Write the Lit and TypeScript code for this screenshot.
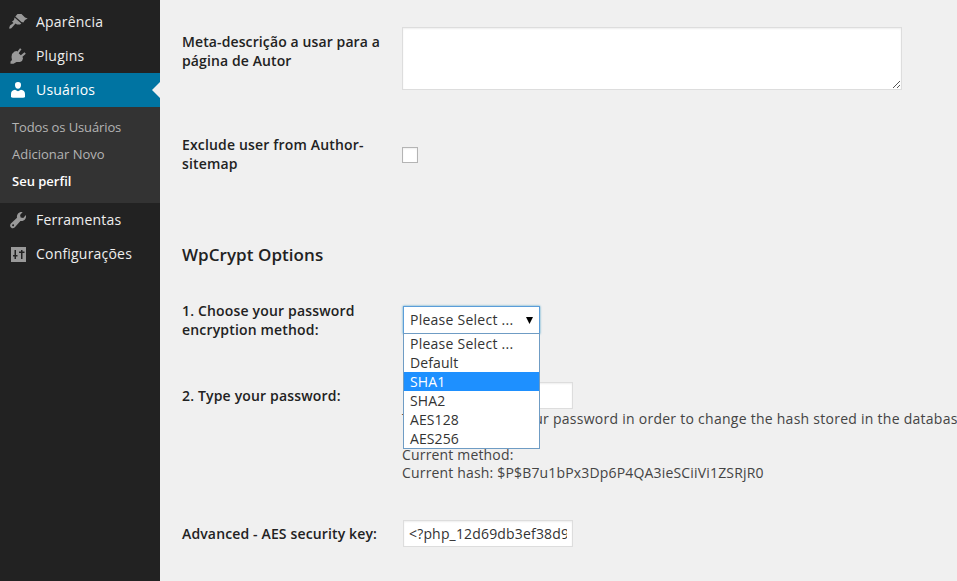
import { LitElement, html, css, svg } from "lit";
import { customElement, property, state } from "lit/decorators.js";
import { classMap } from "lit/directives/class-map.js";

const icons = {
  brush: svg`<path d="M1 16.500 2 13.500 5.500 11 4 9.500 6 8 6.500 5.500 13.300 11.500 12 12.500H9L7.500 11.500 4 15.500 3 16.500z"/><path d="M7.300 4.500 9.500 2h4l1.500 1.500L17 5.500 19.700 6.500 17 8 15.300 10.500 13.500 10z"/>`,
  plug: svg`<path d="M3.500 11 4 8 6.500 5.500 8.500 5 9.500 5.500 12 2.300 13.500 3.300 10.700 7.200 12.800 9.300 16.500 6.300 17.800 7.700 14.500 10.800 15 12.500 14 15 12 16H8.500L5.500 17.700H2.500V15.500L4 14z"/>`,
  user: svg`<path transform="translate(0 .7)" d="M10 1.300a3 3 0 0 1 3 3.200c0 1.900-1.200 3.600-3 3.600S7 6.400 7 4.500a3 3 0 0 1 3-3.200zM7 9l3 1.600L13 9c2.500.4 4 1.700 4 4.300v3c-.3.400-1 .7-2 .7H5c-1 0-1.700-.3-2-.7v-3C3 10.700 4.500 9.400 7 9z"/>`,
  wrench: svg`<path transform="matrix(1.070 0 0 1.110 0 .1)" fill-rule="evenodd" d="M16.700 4.400c.8 3-1.500 5.900-5.100 5.400l-5.200 5.600c-2.500 2.500-5.900-.8-3.700-3.400l5.700-5.200C7.900 3.300 10.800 1 13.700 1.800L11.300 4.400l.5 2.300 2.500.5zM3.900 13.400a.9.900 0 1 0 1.700.6.900.9 0 0 0-1.700-.6z"/>`,
  sliders: svg`<path fill-rule="evenodd" d="M3 3h15v15H3zM6.500 6v5H5v1.500h1.500V15H8v-2.500h1.500V11H8V6zM13 6v1.500h-2V9h2v6h1.500V9h2V7.500h-2V6z"/>`,
};

@customElement("menu-item")
class MenuItem extends LitElement {
  @property() icon: keyof typeof icons = "brush";
  @property() label = "";
  @property({ type: Boolean, reflect: true }) current = false;

  static styles = css`
    :host { display: flex; align-items: center; height: 34px; box-sizing: border-box; padding-left: 8px; gap: 8px; color: #eee; position: relative; font-size: 14px; letter-spacing: 0.2px; }
    :host([current]) { background: #0074a2; color: #fff; }
    :host([current])::after { content: ""; position: absolute; right: 0; top: 9px; border: 8px solid transparent; border-left: 0; border-right-color: #f0f0f0; }
    .icon { width: 20px; height: 20px; flex: none; fill: #999; }
    :host([current]) .icon { fill: #fff; }
    .label { line-height: 18px; white-space: nowrap; }
  `;

  render() {
    return html`<svg class="icon" viewBox="0 0 20 20">${icons[this.icon]}</svg><span class="label">${this.label}</span>`;
  }
}

@customElement("method-select")
class MethodSelect extends LitElement {
  @state() private highlighted = 2;
  private options = ["Please Select ...", "Default", "SHA1", "SHA2", "AES128", "AES256"];

  static styles = css`
    :host { display: block; position: relative; width: 137px; height: 28px; color: #333; font-size: 14px; letter-spacing: 0.1px; z-index: 2; }
    .field { box-sizing: border-box; height: 28px; border: 1px solid #5b9dd9; background: #fff; box-shadow: 0 0 2px rgba(30, 140, 190, 0.8); display: flex; align-items: center; justify-content: space-between; padding: 0 6px; line-height: 18px; }
    .field, .option:first-child { letter-spacing: 0.25px; }
    .arrow { width: 7px; height: 7px; fill: #000; }
    .list { position: absolute; left: 0; top: 27px; width: 137px; height: 116px; box-sizing: border-box; border: 1px solid #6f9cc4; background: #fff; }
    .option { height: 19px; line-height: 19px; padding-left: 6px; }
    .on { background: #1e90ff; color: #fff; }
  `;

  render() {
    return html`
      <div class="field"><span>${this.options[0]}</span><svg class="arrow" viewBox="0 0 7 7"><path d="M0 0h7L3.500 7z" /></svg></div>
      <div class="list">
        ${this.options.map((o, i) => html`<div class=${classMap({ option: true, on: i === this.highlighted })} @mouseenter=${() => (this.highlighted = i)}>${o}</div>`)}
      </div>`;
  }
}

@customElement("app-root")
class AppRoot extends LitElement {
  static styles = css`
    :host { display: flex; width: 957px; height: 581px; overflow: hidden; background: #f0f0f0; color: #444; font: 14px/18px "Open Sans", sans-serif; }
    .side { width: 160px; flex: none; box-sizing: border-box; padding-top: 5px; background: #222; }
    .sub { height: 96px; box-sizing: border-box; background: #333; padding: 7px 12px; font-size: 13px; line-height: 27px; color: #b4b4b4; }
    .todos { letter-spacing: -0.12px; }
    .here { color: #fff; font-weight: 600; }
    .main { flex: 1; min-width: 0; padding-left: 22px; letter-spacing: 0.17px; }
    .row { display: grid; grid-template-columns: 220px 1fr; white-space: nowrap; }
    .label { color: #222; font-weight: 600; line-height: 19px; }
    .meta { height: 108px; padding-top: 27px; }
    .exclude { height: 101px; }
    .method { height: 81px; }
    .password { height: 138px; }
    .meta .label { padding-top: 5px; letter-spacing: 0.11px; }
    .password .label, .key .label { padding-top: 4px; }
    .key .label { letter-spacing: 0.14px; }
    .area { position: relative; box-sizing: border-box; width: 500px; height: 63px; }
    .box { box-sizing: border-box; border: 1px solid #ddd; background: #fff; box-shadow: inset 0 1px 2px rgba(0, 0, 0, 0.07); }
    .grip { position: absolute; right: 1px; bottom: 1px; width: 7px; height: 7px; fill: #555; }
    .check { width: 16px; height: 16px; border-color: #b4b4b4; margin-top: 12px; }
    .title { margin: 0; height: 65px; padding-top: 9px; box-sizing: border-box; font-size: 17px; line-height: 20px; font-weight: 600; color: #222; letter-spacing: 0.05px; }
    .input { width: 170px; height: 27px; margin-left: 1px; color: #333; padding: 0 5px; line-height: 25px; }
    .value { overflow: hidden; }
    .select { margin: 5px 0 0 1px; }
    .note { margin: 1px 0 18px; height: 18px; letter-spacing: 0.26px; }
    .lead { display: inline-block; width: 147px; margin-right: 4px; text-align: justify; text-align-last: justify; }
    .line { height: 18px; }
  `;

  render() {
    const dots = [[0, 6], [1, 5], [2, 4], [3, 3], [4, 2], [5, 1], [6, 0], [4, 6], [5, 5], [6, 4]];
    return html`
      <nav class="side">
        <menu-item icon="brush" label="Aparência"></menu-item>
        <menu-item icon="plug" label="Plugins"></menu-item>
        <menu-item icon="user" label="Usuários" current></menu-item>
        <div class="sub"><div class="todos">Todos os Usuários</div><div>Adicionar Novo</div><div class="here">Seu perfil</div></div>
        <menu-item icon="wrench" label="Ferramentas"></menu-item>
        <menu-item icon="sliders" label="Configurações"></menu-item>
      </nav>
      <main class="main">
        <div class="row meta">
          <div class="label">Meta-descrição a usar para a<br />página de Autor</div>
          <div class="area box"><svg class="grip" viewBox="0 0 7 7">${dots.map(([x, y]) => svg`<rect x=${x} y=${y} width="1" height="1" />`)}</svg></div>
        </div>
        <div class="row exclude">
          <div class="label">Exclude user from Author-<br />sitemap</div>
          <div class="check box"></div>
        </div>
        <h3 class="title">WpCrypt Options</h3>
        <div class="row method">
          <div class="label">1. Choose your password<br />encryption method:</div>
          <method-select class="select"></method-select>
        </div>
        <div class="row password">
          <div class="label">2. Type your password:</div>
          <div>
            <div class="input box"></div>
            <div class="note"><span class="lead">Type in the field your</span>password in order to change the hash stored in the database.</div>
            <div class="line">Current method:</div>
            <div class="line">Current hash: $P$B7u1bPx3Dp6P4QA3ieSCiiVi1ZSRjR0</div>
          </div>
        </div>
        <div class="row key">
          <div class="label">Advanced - AES security key:</div>
          <div class="input box"><div class="value">&lt;?php_12d69db3ef38d9</div></div>
        </div>
      </main>`;
  }
}
